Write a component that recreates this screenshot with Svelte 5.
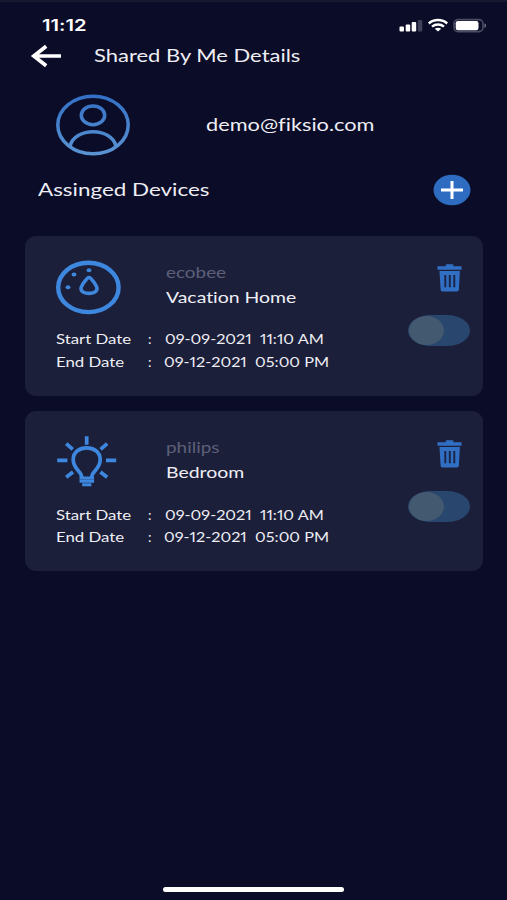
<script lang="ts">
	type Device = {
		icon: 'thermostat' | 'bulb';
		brand: string;
		name: string;
		start: [string, string];
		end: [string, string];
		enabled: boolean;
	};

	let devices: Device[] = $state([
		{
			icon: 'thermostat',
			brand: 'ecobee',
			name: 'Vacation Home',
			start: ['09-09-2021', '11:10 AM'],
			end: ['09-12-2021', '05:00 PM'],
			enabled: false
		},
		{
			icon: 'bulb',
			brand: 'philips',
			name: 'Bedroom',
			start: ['09-09-2021', '11:10 AM'],
			end: ['09-12-2021', '05:00 PM'],
			enabled: false
		}
	]);
</script>

<div class="screen">
	<div class="status-bar">
		<span class="time wide">11:12</span>
		<svg class="status-icons" width="90" height="16" viewBox="0 0 90 16">
			<g fill="#fff">
				<rect x="2.5" y="10.5" width="4.5" height="5" rx="1" />
				<rect x="8.7" y="8.5" width="4.5" height="7" rx="1" />
				<rect x="14.7" y="6" width="4.5" height="9.5" rx="1" />
				<rect x="20.8" y="4" width="4.5" height="11.5" rx="1" fill="#3f4158" />
			</g>
			<g fill="none" stroke="#fff" stroke-width="2.4">
				<path d="M31.8 7.5c5-4.6 13.4-4.6 18.4 0" />
				<path d="M35 10.6c3.4-2.9 8.6-2.9 12 0" />
			</g>
			<path d="M37.8 12.8c1.8-1.5 4.6-1.5 6.4 0L41 15.5z" fill="#fff" />
			<rect x="57" y="3.6" width="29" height="12" rx="4" fill="none" stroke="#4b4d62" stroke-width="1.6" />
			<rect x="58.7" y="5" width="22.8" height="9.2" rx="2.3" fill="#fff" />
			<path d="M87.5 7.5c2 .5 2 3.8 0 4.3z" fill="#77798a" />
		</svg>
	</div>

	<header>
		<button class="back" aria-label="Back">
			<svg width="32" height="24" viewBox="0 0 32 24">
				<path d="M31 12H4M16.2 2.3 3.8 12l12.4 9.7" fill="none" stroke="#fff" stroke-width="3.7" />
			</svg>
		</button>
		<h1 class="title wide">Shared By Me Details</h1>
	</header>

	<section class="profile">
		<svg width="74" height="62" viewBox="0 0 74 62">
			<defs>
				<linearGradient id="avatar" x1="0" y1="0" x2="0" y2="62" gradientUnits="userSpaceOnUse">
					<stop offset="0" stop-color="#326fc5" />
					<stop offset="1" stop-color="#5b95d3" />
				</linearGradient>
			</defs>
			<g fill="none" stroke="url(#avatar)" stroke-width="3.5">
				<ellipse cx="37" cy="31" rx="35.2" ry="28.8" />
				<ellipse cx="37" cy="21.3" rx="11.7" ry="9.4" />
				<path d="M14 52C19 33 55 33 60 52" />
			</g>
		</svg>
		<span class="email wide">demo@fiksio.com</span>
	</section>

	<section class="assigned">
		<h2 class="heading wide">Assinged Devices</h2>
		<button class="add" aria-label="Add device">
			<svg width="38" height="32" viewBox="0 0 38 32">
				<ellipse cx="19" cy="16" rx="18.5" ry="15.3" fill="#2d6cc0" />
				<path d="M8 16h22M19 7v18" stroke="#fff" stroke-width="3" />
			</svg>
		</button>
	</section>

	<ul class="devices">
		{#each devices as device}
			<li class="card">
				<div class="info">
					<div class="summary">
						{#if device.icon === 'thermostat'}
							<svg width="66" height="56" viewBox="0 0 66 56">
								<g fill="none" stroke="#3e87df">
									<ellipse cx="32.4" cy="26.4" rx="30.2" ry="24.7" stroke-width="4.4" />
									<path d="M33 16.5C31 16.5 25 25 25 27.5c0 6.5 16 6.5 16 0 0-2.5-6-11-8-11z" stroke-linejoin="round" stroke-width="3.6" />
								</g>
								<g fill="#3e87df">
									<ellipse cx="33" cy="9.2" rx="2.4" ry="2" />
									<ellipse cx="18" cy="13.4" rx="2.4" ry="2" />
									<ellipse cx="12" cy="26.2" rx="2.4" ry="2" />
								</g>
							</svg>
						{:else}
							<svg width="66" height="56" viewBox="0 0 66 56">
								<g fill="none" stroke="#3e87df" stroke-width="3.7">
									<path d="M25.7 41c0-6-8.5-7.5-8.5-17.5C17.2 8 44.2 8 44.2 23.5c0 10-8.5 11.5-8.5 17.5" />
									<path d="M23.5 42h14.6M23.5 45.3h14.6M26.2 48.8h9.2" stroke-width="2.9" />
									<path d="M30.7 .3v8.5M10.2 7.6l6.6 5.7M51.2 7.6l-6.6 5.7M1.2 24.3h10.2M50 24.3h10.2M10.2 41.3l6.8-5.3M51.2 41.3l-6.8-5.3" />
								</g>
							</svg>
						{/if}
						<div class="names">
							<span class="brand wide">{device.brand}</span>
							<span class="name wide">{device.name}</span>
						</div>
					</div>
					<dl>
						<dt class="wide">Start Date</dt>
						<dd class="colon">:</dd>
						<dd class="date wide">{device.start[0]}&nbsp; {device.start[1]}</dd>
						<dt class="wide">End Date</dt>
						<dd class="colon">:</dd>
						<dd class="date end wide">{device.end[0]}&nbsp; {device.end[1]}</dd>
					</dl>
				</div>
				<div class="actions">
					<button class="delete" aria-label="Remove {device.name}">
						<svg width="26" height="28" viewBox="0 0 26 28">
							<path d="M.5 2.3h8.3V.8q0-.6.7-.6h6.2q.7 0 .7.6v1.5h8.1v3.5H.5z" fill="#306fc4" />
							<path d="M2.5 7h20.4l-1 18.500q-.1 2-2.1 2H5.7q-2 0-2.1-2z" fill="#306fc4" />
							<path d="M8.3 11v12.3M12.8 11v12.3M17.3 11v12.3" stroke="#1b2442" stroke-width="1.9" />
						</svg>
					</button>
					<button
						class="toggle"
						class:on={device.enabled}
						role="switch"
						aria-checked={device.enabled}
						aria-label="Enable {device.name}"
						onclick={() => (device.enabled = !device.enabled)}
					>
						<span class="knob"></span>
					</button>
				</div>
			</li>
		{/each}
	</ul>

	<div class="home-indicator"></div>
</div>

<style>
	:global(body) {
		margin: 0;
		background: #0b0c28;
	}

	.screen {
		display: flex;
		flex-direction: column;
		box-sizing: border-box;
		width: 507px;
		height: 900px;
		border-top: 2px solid #17182f;
		background: #0b0c28;
		color: #eeeef4;
		font-family: Lato, 'Liberation Sans', sans-serif;
	}

	h1,
	h2,
	ul,
	dl,
	dd {
		margin: 0;
		padding: 0;
		font-weight: 400;
	}

	button {
		display: block;
		padding: 0;
		border: 0;
		background: none;
	}

	svg {
		display: block;
		flex: none;
		overflow: visible;
	}

	.wide {
		display: block;
		white-space: nowrap;
		font-variant-ligatures: none;
		transform: scaleX(1.2);
		transform-origin: left center;
	}

	.status-bar {
		display: flex;
		justify-content: space-between;
		align-items: center;
		height: 38px;
		padding: 9px 20px 0 42px;
		box-sizing: border-box;
	}

	.time {
		color: #fff;
		font-family: Inter, sans-serif;
		font-size: 15.5px;
		font-weight: 600;
		transform: scaleX(1.3);
	}

	.status-icons {
		margin-bottom: 3px;
	}

	header {
		display: flex;
		align-items: center;
		height: 31px;
		padding-left: 30px;
	}

	.title {
		margin-left: 32px;
		padding-bottom: 1px;
		font-size: 17.5px;
		transform: scaleX(1.255);
	}

	.profile {
		display: flex;
		align-items: center;
		height: 107px;
		padding-left: 56px;
	}

	.email {
		margin-left: 76px;
		padding-bottom: 1px;
		font-size: 17.5px;
		transform: scaleX(1.243);
	}

	.assigned {
		display: flex;
		justify-content: space-between;
		align-items: center;
		height: 24px;
		padding: 0 36px 0 38px;
	}

	.heading {
		padding-bottom: 1px;
		font-size: 17.5px;
		transform: scaleX(1.28);
	}

	.devices {
		display: flex;
		flex-direction: column;
		gap: 15.5px;
		margin: 33.5px 24px 0 25px;
		list-style: none;
	}

	.card {
		display: flex;
		justify-content: space-between;
		height: 160px;
		padding: 25px 13px 0 31px;
		box-sizing: border-box;
		border-radius: 11px;
		background: #1c1f3a;
	}

	.summary {
		display: flex;
		gap: 44px;
	}

	.names {
		display: flex;
		flex-direction: column;
	}

	.brand {
		color: #5d6079;
		font-size: 15px;
		line-height: 23px;
		transform: scaleX(1.26);
	}

	.name {
		font-size: 16px;
		line-height: 26px;
		transform: scaleX(1.213);
	}

	dl {
		display: grid;
		grid-template-columns: 92px 17px auto;
		margin-top: 11.5px;
		font-size: 14px;
		line-height: 22.7px;
	}

	.date {
		font-variant-numeric: proportional-nums;
		transform: scaleX(1.16);
	}

	.date.end {
		margin-left: -1px;
	}

	.actions {
		display: flex;
		flex-direction: column;
		align-items: flex-end;
		gap: 23px;
		padding-top: 3.5px;
	}

	.delete {
		margin-right: 7px;
	}

	.toggle {
		display: flex;
		width: 62px;
		height: 31px;
		border-radius: 23px / 15.5px;
		background: #29466f;
	}

	.knob {
		width: 35px;
		height: 29px;
		margin: 1px;
		border-radius: 50%;
		background: #435970;
	}

	.toggle.on {
		justify-content: flex-end;
	}

	.home-indicator {
		width: 181px;
		height: 5.5px;
		margin: auto 0 8px 163px;
		border-radius: 3px;
		background: #fff;
	}
</style>
